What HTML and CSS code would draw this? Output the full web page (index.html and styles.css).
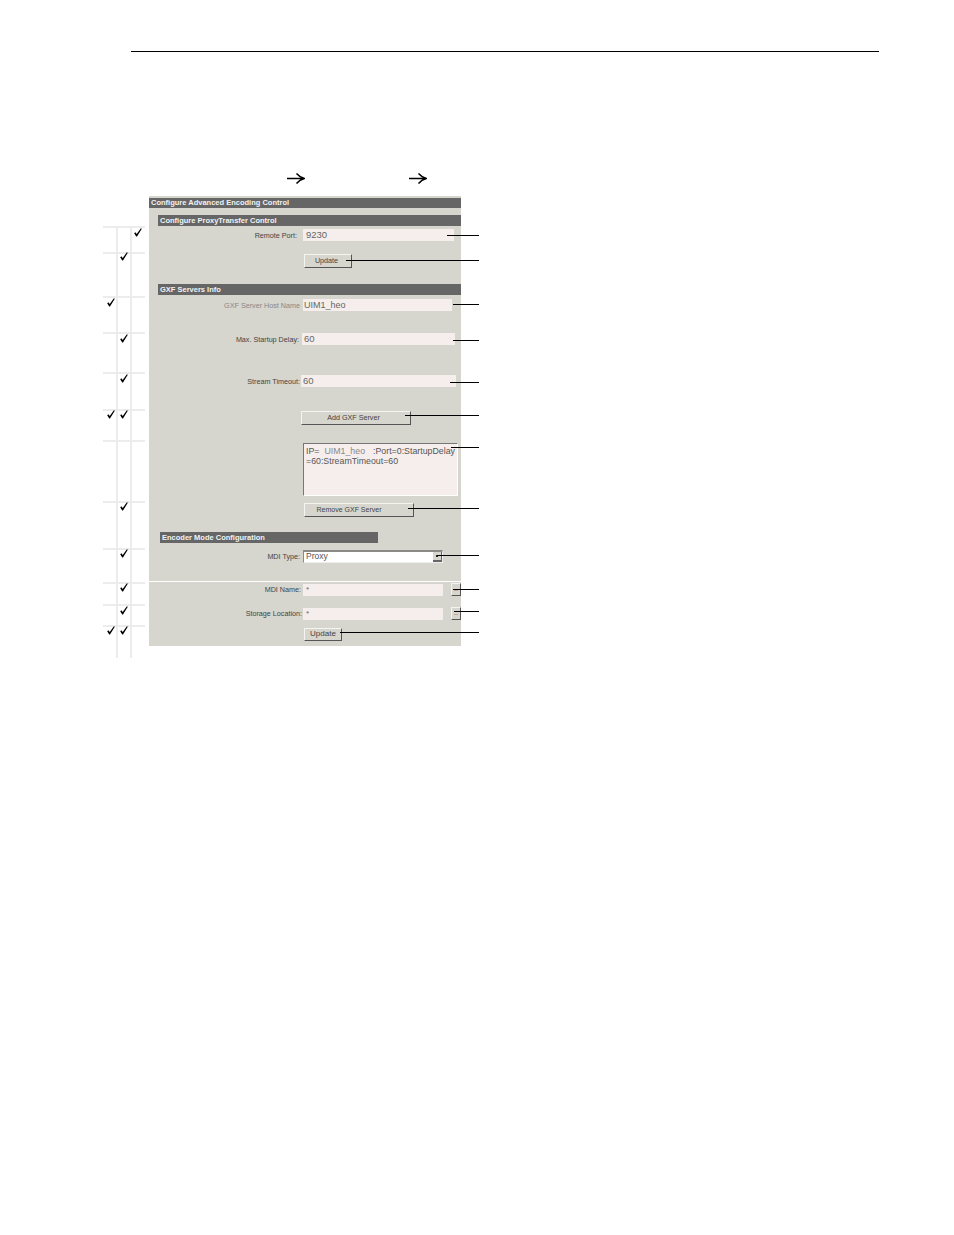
FILE: index.html
```html
<!DOCTYPE html>
<html lang="en">
<head>
    <meta charset="UTF-8">
    <meta name="viewport" content="width=device-width, initial-scale=1.0">
    <title>Configure Advanced Encoding Control</title>
    <link rel="stylesheet" href="styles.css">
</head>
<body>

    <svg class="defs" width="0" height="0">
        <symbol id="tick" viewBox="0 0 8 9">
            <path d="M0.2 5.2L1.4 4.3L2.7 6L6.9 0.3L7.8 0.8L3 8.6H2.2Z" fill="#000"/>
        </symbol>
        <symbol id="arrow" viewBox="0 0 18 11">
            <path d="M0 5.5H16.5M9.5 0.6C11.5 3 14 4.6 17.4 5.5C14 6.4 11.5 8 9.5 10.4" fill="none" stroke="#000" stroke-width="1.5"/>
        </symbol>
    </svg>

    <div class="page">
        <hr class="top-rule">

        <!-- Menu path arrows -->
        <div class="path-arrows">
            <svg class="arrow"><use href="#arrow"/></svg>
            <svg class="arrow"><use href="#arrow"/></svg>
        </div>

        <div class="figure">
            <!-- Role table with the checkmarks -->
            <div class="roles">
                <div class="role-row role-1 up"><span class="cell"></span><span class="cell"></span><span class="cell"><svg class="tick"><use href="#tick"/></svg></span></div>
                <div class="role-row role-2 lift"><span class="cell"></span><span class="cell"><svg class="tick"><use href="#tick"/></svg></span><span class="cell"></span></div>
                <div class="role-row role-3 up"><span class="cell"><svg class="tick"><use href="#tick"/></svg></span><span class="cell"></span><span class="cell"></span></div>
                <div class="role-row role-4 up"><span class="cell"></span><span class="cell"><svg class="tick"><use href="#tick"/></svg></span><span class="cell"></span></div>
                <div class="role-row role-5 up"><span class="cell"></span><span class="cell"><svg class="tick"><use href="#tick"/></svg></span><span class="cell"></span></div>
                <div class="role-row role-6"><span class="cell"><svg class="tick"><use href="#tick"/></svg></span><span class="cell"><svg class="tick"><use href="#tick"/></svg></span><span class="cell"></span></div>
                <div class="role-row role-7"><span class="cell"></span><span class="cell"></span><span class="cell"></span></div>
                <div class="role-row role-8"><span class="cell"></span><span class="cell"><svg class="tick"><use href="#tick"/></svg></span><span class="cell"></span></div>
                <div class="role-row role-9"><span class="cell"></span><span class="cell"><svg class="tick"><use href="#tick"/></svg></span><span class="cell"></span></div>
                <div class="role-row role-10"><span class="cell"></span><span class="cell"><svg class="tick"><use href="#tick"/></svg></span><span class="cell"></span></div>
                <div class="role-row role-11 up"><span class="cell"></span><span class="cell"><svg class="tick"><use href="#tick"/></svg></span><span class="cell"></span></div>
                <div class="role-row role-12"><span class="cell"><svg class="tick"><use href="#tick"/></svg></span><span class="cell"><svg class="tick"><use href="#tick"/></svg></span><span class="cell"></span></div>
            </div>

            <!-- Screenshot panel -->
            <div class="panel">
                <div class="bar title-bar">Configure Advanced Encoding Control</div>

                <div class="bar section-bar">Configure ProxyTransfer Control</div>
                <div class="row row-port">
                    <label class="row-label">Remote Port:</label>
                    <div class="input input-port">9230</div>
                </div>
                <div class="row row-update">
                    <button class="btn btn-update">Update</button>
                </div>

                <div class="bar section-bar gxf-bar">GXF Servers Info</div>
                <div class="row row-host">
                    <label class="row-label muted">GXF Server Host Name</label>
                    <div class="input input-host">UIM1_heo</div>
                </div>
                <div class="row row-delay">
                    <label class="row-label">Max. Startup Delay:</label>
                    <div class="input input-delay">60</div>
                </div>
                <div class="row row-timeout">
                    <label class="row-label">Stream Timeout:</label>
                    <div class="input input-timeout">60</div>
                </div>
                <div class="row row-add">
                    <button class="btn btn-add">Add GXF Server</button>
                </div>
                <div class="row row-list">
                    <div class="listbox">
                        <div class="list-line"><span>IP=</span><span class="muted list-host">UIM1_heo</span><span class="list-port">:Port=0:StartupDelay</span></div>
                        <div class="list-line">=60:StreamTimeout=60</div>
                    </div>
                </div>
                <div class="row row-remove">
                    <button class="btn btn-remove">Remove GXF Server</button>
                </div>

                <div class="bar encoder-bar">Encoder Mode Configuration</div>
                <div class="row row-type">
                    <label class="row-label">MDI Type:</label>
                    <div class="select">
                        <span>Proxy</span>
                        <span class="select-btn"><i></i></span>
                    </div>
                </div>
                <div class="divider"></div>
                <div class="row row-name">
                    <label class="row-label">MDI Name:</label>
                    <div class="input input-path">*</div>
                    <button class="btn btn-browse">..</button>
                </div>
                <div class="row row-storage">
                    <label class="row-label">Storage Location:</label>
                    <div class="input input-path">*</div>
                    <button class="btn btn-browse">..</button>
                </div>
                <div class="row row-save">
                    <button class="btn btn-save">Update</button>
                </div>
            </div>
        </div>

        <!-- Callout leader lines -->
        <div class="callout line-1"></div>
        <div class="callout line-2"></div>
        <div class="callout line-3"></div>
        <div class="callout line-4"></div>
        <div class="callout line-5"></div>
        <div class="callout line-6"></div>
        <div class="callout line-7"></div>
        <div class="callout line-8"></div>
        <div class="callout line-9"></div>
        <div class="callout line-10"></div>
        <div class="callout line-11"></div>
        <div class="callout line-12"></div>
    </div>

</body>
</html>
```

FILE: styles.css
```css
body {
    margin: 0;
    background: #fff;
    font-family: 'Liberation Sans', Arial, sans-serif;
}

.defs {
    position: absolute;
}

.page {
    position: relative;
    width: 954px;
    height: 1235px;
    padding-top: 51px;
    box-sizing: border-box;
    overflow: hidden;
}

.top-rule {
    width: 748px;
    height: 1px;
    margin: 0 0 0 131px;
    border: none;
    background: #000;
}

.path-arrows {
    display: flex;
    gap: 104px;
    height: 11px;
    margin: 121px 0 0 287px;
}

.arrow {
    width: 18px;
    height: 11px;
}

.figure {
    display: flex;
    align-items: flex-start;
    margin: 12px 0 0 103px;
}

/* Role table */
.roles {
    width: 42px;
    margin: 30px 4px 0 0;
}

.role-row {
    display: grid;
    grid-template-columns: 13px 14px 15px;
    box-sizing: border-box;
    border-top: 2px solid #ececec;
}

.role-1 { height: 26px; }
.role-2 { height: 44px; }
.role-3 { height: 36px; }
.role-4 { height: 40px; }
.role-5 { height: 37px; }
.role-6 { height: 31px; }
.role-7 { height: 61px; }
.role-8 { height: 47px; }
.role-9 { height: 34px; }
.role-10 { height: 22px; }
.role-11 { height: 21px; }
.role-12 { height: 33px; }

.cell {
    padding-left: 4px;
}

.cell + .cell {
    padding-left: 2px;
    border-left: 2px solid #ececec;
}

.tick {
    display: block;
    width: 8px;
    height: 9px;
    margin-top: -1px;
}

.up .tick { margin-top: 0; }
.lift .tick { margin-top: -2px; }

/* Panel */
.panel {
    flex: none;
    width: 312px;
    height: 450px;
    padding-top: 2px;
    box-sizing: border-box;
    background: #d6d5ce;
    color: #444;
    font-size: 7.2px;
}

.bar {
    height: 11px;
    padding-left: 2px;
    background: #666;
    color: #f2f2f2;
    font-size: 7.5px;
    font-weight: bold;
    line-height: 11px;
    white-space: nowrap;
}

.title-bar {
    height: 10px;
    line-height: 10px;
}

.section-bar {
    margin: 7px 0 0 9px;
}

.gxf-bar {
    margin-top: 16px;
}

.encoder-bar {
    width: 216px;
    margin: 15px 0 0 11px;
}

.row {
    display: flex;
    align-items: center;
    white-space: nowrap;
}

.row-label {
    flex: none;
    width: 154px;
    padding-right: 3px;
    box-sizing: border-box;
    text-align: right;
}

.muted {
    color: #888;
}

.input {
    height: 12px;
    padding-left: 1px;
    box-sizing: border-box;
    background: #f5eeec;
    color: #666;
    font-size: 9.5px;
    line-height: 12px;
}

.row-port { margin-top: 3px; }
.row-port .row-label { padding-right: 6px; }
.input-port { width: 151px; padding-left: 3px; }

.row-update { margin-top: 13px; padding-left: 155px; }

.row-host { margin-top: 4px; }
.input-host { width: 149px; font-size: 9px; }

.row-delay { margin-top: 22px; }
.row-delay .row-label { width: 153px; }
.input-delay { width: 153px; padding-left: 2px; }

.row-timeout { margin-top: 30px; }
.row-timeout .row-label { width: 152px; padding-right: 1px; }
.input-timeout { width: 155px; padding-left: 2px; }

.row-add { margin-top: 24px; padding-left: 152px; }

.row-list { margin-top: 18px; padding-left: 154px; }

.listbox {
    width: 155px;
    height: 53px;
    padding: 2px 0 0 2px;
    box-sizing: border-box;
    background: #f5eeec;
    border-top: 1px solid #777;
    border-left: 1px solid #777;
    border-right: 1px solid #fff;
    border-bottom: 1px solid #fff;
    color: #555;
    font-size: 8.8px;
    line-height: 10px;
}

.list-line {
    display: flex;
}

.list-host { margin-left: 5px; }
.list-port { margin-left: 8px; }

.row-remove { margin-top: 7px; padding-left: 155px; }

.btn {
    display: block;
    height: 14px;
    padding: 0 0 2px;
    box-sizing: border-box;
    background: #d6d5ce;
    border: 1px solid;
    border-color: #f4f4f0 #555 #555 #f4f4f0;
    color: #444;
    font-family: inherit;
    font-size: 7.2px;
    line-height: 9px;
}

.btn-update { width: 48px; padding-right: 3px; }
.btn-add { width: 110px; padding-right: 5px; }
.btn-remove { width: 110px; padding-right: 20px; font-size: 7px; }
.btn-save { width: 38px; height: 13px; font-size: 8px; }

.row-type { margin-top: 7px; }

.select {
    display: flex;
    justify-content: space-between;
    width: 140px;
    height: 13px;
    padding-left: 2px;
    box-sizing: border-box;
    background: #fff;
    border-top: 2px solid #8a8a86;
    border-left: 1px solid #8a8a86;
    border-right: 1px solid #eee;
    border-bottom: 1px solid #eee;
    color: #555;
    font-size: 8.5px;
    line-height: 8px;
}

.select-btn {
    position: relative;
    width: 9px;
    box-sizing: border-box;
    background: #d6d5ce;
    border-right: 1px solid #666;
    border-bottom: 2px solid #666;
}

.select-btn i {
    position: absolute;
    top: 3px;
    left: 3px;
    width: 2px;
    height: 2px;
    background: #222;
}

.divider {
    height: 1px;
    margin-top: 18px;
    background: #fff;
}

.row-name { margin-top: 1px; }
.row-storage { margin-top: 11px; }
.row-name .row-label { padding-right: 2px; }
.row-storage .row-label { padding-right: 1px; }
.row-name .input,
.row-storage .input { padding-left: 3px; font-size: 8px; }
.input-path { width: 140px; }

.btn-browse {
    flex: none;
    width: 10px;
    height: 13px;
    margin-left: 8px;
    font-size: 7px;
}

.row-save { margin-top: 8px; padding-left: 155px; }

/* Leader lines lying over the panel */
.callout {
    position: absolute;
    right: 475px;
    height: 1px;
    background: #000;
}

.line-1 { top: 235px; left: 447px; }
.line-2 { top: 260px; left: 346px; }
.line-3 { top: 304px; left: 453px; }
.line-4 { top: 340px; left: 453px; }
.line-5 { top: 382px; left: 450px; }
.line-6 { top: 415px; left: 405px; }
.line-7 { top: 447px; left: 451px; }
.line-8 { top: 508px; left: 408px; }
.line-9 { top: 555px; left: 437px; }
.line-10 { top: 589px; left: 453px; }
.line-11 { top: 611px; left: 454px; }
.line-12 { top: 632px; left: 340px; }
```
